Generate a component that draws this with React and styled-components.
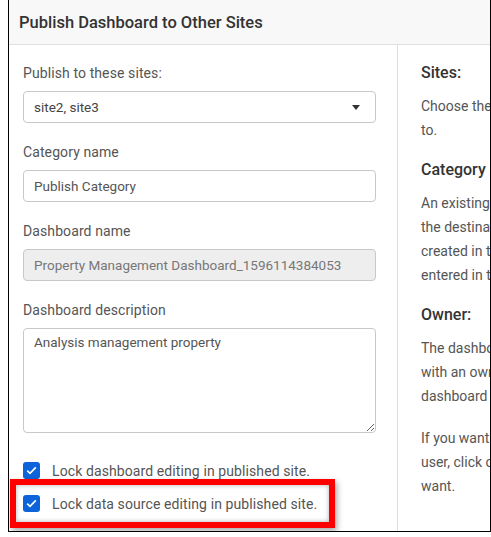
import React from 'react';
import styled, { createGlobalStyle } from 'styled-components';

const GlobalStyle = createGlobalStyle`
  html, body {
    margin: 0;
    padding: 0;
    background: #fff;
  }
  body {
    font-family: Roboto, 'Noto Sans', Arial, sans-serif;
  }
`;

const Frame = styled.div`
  box-sizing: border-box;
  margin-left: 8px;
  width: 483px;
  height: 532px;
  border-left: 1px solid #000;
  border-right: 1px solid #000;
  border-bottom: 1px solid #000;
  overflow: hidden;
  display: flex;
  flex-direction: column;
`;

const Header = styled.div`
  height: 44px;
  flex: none;
  background: #f8f8f8;
  border-bottom: 1px solid #e0e0e0;
  display: flex;
  align-items: center;
  padding-left: 10px;
  font-size: 16.5px;
  font-weight: 500;
  color: #333;
`;

const Body = styled.div`
  flex: 1;
  display: flex;
  min-height: 0;
`;

const FormPanel = styled.div`
  box-sizing: border-box;
  width: 389px;
  flex: none;
  padding: 18px 0 0 14px;
  border-right: 1px solid #ddd;
  display: flex;
  flex-direction: column;
`;

const HelpPanel = styled.div`
  flex: none;
  width: 420px;
  padding: 18px 0 0 23px;
  white-space: nowrap;
`;

const Field = styled.div`
  margin-bottom: 19px;
`;

const Label = styled.div`
  font-size: 14px;
  line-height: 20px;
  letter-spacing: 0.1px;
  color: #555;
  margin-bottom: 8px;
`;

const Input = styled.input`
  box-sizing: border-box;
  width: 353px;
  height: 32px;
  padding: 0 10px;
  border: 1px solid #c8c8c8;
  border-radius: 4px;
  font-family: inherit;
  font-size: 13.5px;
  color: ${p => (p.disabled ? '#777' : '#555')};
  background: ${p => (p.disabled ? '#eeeeee' : '#fff')};
  outline: none;
`;

const Select = styled.div`
  box-sizing: border-box;
  width: 353px;
  height: 32px;
  padding: 0 10px;
  border: 1px solid #c8c8c8;
  border-radius: 4px;
  font-size: 13.5px;
  color: #444;
  display: flex;
  align-items: center;
  justify-content: space-between;
`;

const Caret = styled.span`
  width: 0;
  height: 0;
  margin-right: 5px;
  border-left: 4px solid transparent;
  border-right: 4px solid transparent;
  border-top: 5px solid #333;
`;

const TextArea = styled.textarea`
  box-sizing: border-box;
  display: block;
  width: 353px;
  height: 105px;
  padding: 5px 10px;
  border: 1px solid #c8c8c8;
  border-radius: 4px;
  font-family: inherit;
  font-size: 13.5px;
  line-height: 16px;
  color: #555;
  outline: none;
`;

const CheckRow = styled.label`
  display: flex;
  align-items: center;
  gap: 12px;
  height: 17px;
  font-size: 14px;
  letter-spacing: 0.1px;
  color: #555;
  margin-top: ${p => p.$top || 0}px;
`;

const Box = styled.span`
  box-sizing: border-box;
  width: 17px;
  height: 17px;
  border-radius: 3px;
  background: #0d63d9;
  display: flex;
  align-items: center;
  justify-content: center;
`;

const Highlight = styled.div`
  box-sizing: border-box;
  width: 325px;
  height: 49px;
  margin-left: -13px;
  padding-left: 7px;
  border: 6px solid #ff0000;
  box-shadow: 2px 3px 6px rgba(0, 0, 0, 0.35), inset 0 0 5px rgba(0, 0, 0, 0.3);
  display: flex;
  align-items: center;
`;

const HelpTitle = styled.div`
  font-size: 16px;
  font-weight: 500;
  line-height: 20px;
  color: #333;
  margin-bottom: 11px;
`;

const HelpText = styled.p`
  margin: 0 0 18px;
  font-size: 14px;
  line-height: 24px;
  color: #555;
`;

function Check({ children, top }) {
  return (
    <CheckRow $top={top}>
      <Box>
        <svg width="11" height="9" viewBox="0 0 11 9">
          <path d="M1.2 4.6 L4 7.3 L9.8 1.4" fill="none" stroke="#fff" strokeWidth="1.7" />
        </svg>
      </Box>
      {children}
    </CheckRow>
  );
}

export default function App() {
  return (
    <>
      <GlobalStyle />
      <Frame>
        <Header>Publish Dashboard to Other Sites</Header>
        <Body>
          <FormPanel>
            <Field>
              <Label>Publish to these sites:</Label>
              <Select>
                site2, site3
                <Caret />
              </Select>
            </Field>
            <Field>
              <Label>Category name</Label>
              <Input readOnly defaultValue="Publish Category" />
            </Field>
            <Field>
              <Label>Dashboard name</Label>
              <Input disabled defaultValue="Property Management Dashboard_1596114384053" />
            </Field>
            <Field>
              <Label>Dashboard description</Label>
              <TextArea readOnly defaultValue="Analysis management property" />
            </Field>
            <Check top={10}>Lock dashboard editing in published site.</Check>
            <Highlight>
              <Check>Lock data source editing in published site.</Check>
            </Highlight>
          </FormPanel>
          <HelpPanel>
            <HelpTitle>Sites:</HelpTitle>
            <HelpText>
              Choose the sites to which the dashboard should be published
              <br />
              to.
            </HelpText>
            <HelpTitle>Category name:</HelpTitle>
            <HelpText>
              An existing category will be used if it is present in
              <br />
              the destination site; otherwise, a new category will be
              <br />
              created in the destination site with the name
              <br />
              entered in the category name field.
            </HelpText>
            <HelpTitle>Owner:</HelpTitle>
            <HelpText>
              The dashboard will be published to the target site
              <br />
              with an owner who has the same email as the source
              <br />
              dashboard owner.
            </HelpText>
            <HelpText>
              If you want to publish the dashboard as a different
              <br />
              user, click on the owner field and select the user you
              <br />
              want.
            </HelpText>
          </HelpPanel>
        </Body>
      </Frame>
    </>
  );
}
